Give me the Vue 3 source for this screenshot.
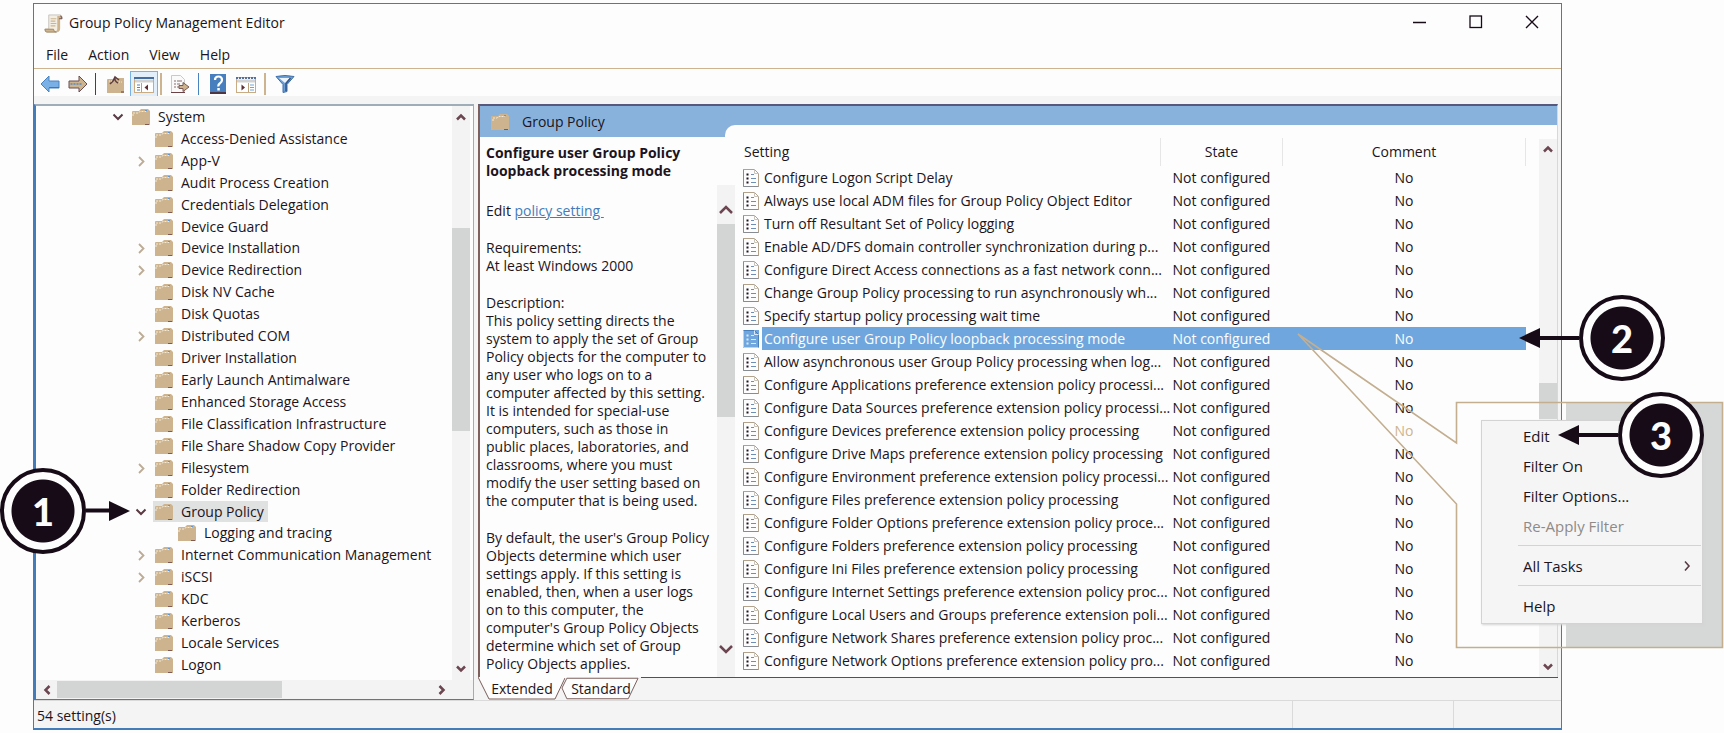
<script setup>
import { ref } from 'vue'

const menus = ['File', 'Action', 'View', 'Help']

const tree = [
  { name: 'System', level: 0, mark: 'open' },
  { name: 'Access-Denied Assistance', level: 1 },
  { name: 'App-V', level: 1, mark: 'closed' },
  { name: 'Audit Process Creation', level: 1 },
  { name: 'Credentials Delegation', level: 1 },
  { name: 'Device Guard', level: 1 },
  { name: 'Device Installation', level: 1, mark: 'closed' },
  { name: 'Device Redirection', level: 1, mark: 'closed' },
  { name: 'Disk NV Cache', level: 1 },
  { name: 'Disk Quotas', level: 1 },
  { name: 'Distributed COM', level: 1, mark: 'closed' },
  { name: 'Driver Installation', level: 1 },
  { name: 'Early Launch Antimalware', level: 1 },
  { name: 'Enhanced Storage Access', level: 1 },
  { name: 'File Classification Infrastructure', level: 1 },
  { name: 'File Share Shadow Copy Provider', level: 1 },
  { name: 'Filesystem', level: 1, mark: 'closed' },
  { name: 'Folder Redirection', level: 1 },
  { name: 'Group Policy', level: 1, mark: 'open', selected: true },
  { name: 'Logging and tracing', level: 2 },
  { name: 'Internet Communication Management', level: 1, mark: 'closed' },
  { name: 'iSCSI', level: 1, mark: 'closed' },
  { name: 'KDC', level: 1 },
  { name: 'Kerberos', level: 1 },
  { name: 'Locale Services', level: 1 },
  { name: 'Logon', level: 1 },
]

const settings = [
  'Configure Logon Script Delay',
  'Always use local ADM files for Group Policy Object Editor',
  'Turn off Resultant Set of Policy logging',
  'Enable AD/DFS domain controller synchronization during p...',
  'Configure Direct Access connections as a fast network conn...',
  'Change Group Policy processing to run asynchronously wh...',
  'Specify startup policy processing wait time',
  'Configure user Group Policy loopback processing mode',
  'Allow asynchronous user Group Policy processing when log...',
  'Configure Applications preference extension policy processi...',
  'Configure Data Sources preference extension policy processi...',
  'Configure Devices preference extension policy processing',
  'Configure Drive Maps preference extension policy processing',
  'Configure Environment preference extension policy processi...',
  'Configure Files preference extension policy processing',
  'Configure Folder Options preference extension policy proce...',
  'Configure Folders preference extension policy processing',
  'Configure Ini Files preference extension policy processing',
  'Configure Internet Settings preference extension policy proc...',
  'Configure Local Users and Groups preference extension poli...',
  'Configure Network Shares preference extension policy proc...',
  'Configure Network Options preference extension policy pro...',
]
const selected = ref(7)
const dimmed = 11

const description = [
  ['This policy setting directs the', 'system to apply the set of Group', 'Policy objects for the computer to',
    'any user who logs on to a', 'computer affected by this setting.', 'It is intended for special-use',
    'computers, such as those in', 'public places, laboratories, and', 'classrooms, where you must',
    'modify the user setting based on', 'the computer that is being used.'],
  ["By default, the user's Group Policy", 'Objects determine which user', 'settings apply. If this setting is',
    'enabled, then, when a user logs', 'on to this computer, the', "computer's Group Policy Objects",
    'determine which set of Group', 'Policy Objects applies.'],
]
</script>

<template>
  <div class="page">
    <main class="window">
      <header class="title-bar">
        <svg class="app-icon" viewBox="0 0 20 20" aria-hidden="true">
          <path d="M5 1h12q2 0 2 3h-3v12q0 3-3 3H3q-2 0-2-3h4z" fill="#f3eee4" stroke="#c6c3bd" />
          <path d="M14 2h3v13q0 4-4 4H3q-2 0-2-3h9q0 2 2 2 2 0 2-3z" fill="#cdb48e" />
          <path d="M10 16q0 3 3 3H3q-2 0-2-3z" fill="#cdb48e" stroke="#a58a63" />
          <path d="M7 5h6M7 7.500h5M7 10h6M7 12.500h5" stroke="#cdb48e" stroke-width="1.300" />
          <path d="M17 2q2 0 2 3h-3" fill="#c9a97d" stroke="#6a4a4c" />
        </svg>
        <h1>Group Policy Management Editor</h1>
        <div class="caption-buttons">
          <button aria-label="Minimize"><svg viewBox="0 0 14 14"><path d="M0 7.500h13" stroke="#160b16" stroke-width="1.500" /></svg></button>
          <button aria-label="Maximize"><svg viewBox="0 0 14 14"><rect x="1" y="1" width="11.500" height="11.500" fill="none" stroke="#160b16" stroke-width="1.300" /></svg></button>
          <button aria-label="Close"><svg viewBox="0 0 14 14"><path d="M1 1l12 12M13 1L1 13" stroke="#160b16" stroke-width="1.400" /></svg></button>
        </div>
      </header>

      <nav class="menu-bar">
        <button v-for="m in menus" :key="m">{{ m }}</button>
      </nav>

      <div class="toolbar">
        <button class="tool" aria-label="Back">
          <svg viewBox="0 0 20 18"><path d="M1 9L9 1v5h10v7H9v4z" fill="#79b0e6" stroke="#4a82bf" /><path d="M9 12.500h10" stroke="#3f76b5" /></svg>
        </button>
        <button class="tool forward" aria-label="Forward">
          <svg viewBox="0 0 20 18"><path d="M19 9l-8-8v5H1v7h10v4z" fill="#cdb48e" stroke="#6b4d50" /><path d="M2.500 9h12" stroke="#5a88bd" stroke-width="1.500" stroke-dasharray="2 1" /></svg>
        </button>
        <i class="sep dark"></i>
        <button class="tool" aria-label="Up one level">
          <svg viewBox="0 0 20 18"><path d="M1 5q0-1 1-1h5l2-1h9v15H1z" fill="#cdb48e" /><path d="M4 9l3-3 2-4 4 3M9 2q-1 4 3 6" fill="none" stroke="#5d3c42" stroke-width="1.500" /><path d="M3 6h3M13 7h3" stroke="#f3e9d8" stroke-dasharray="1 1" /><path d="M15 17h3" stroke="#6b3f44" /></svg>
        </button>
        <button class="tool pressed" aria-label="Show or hide console tree" aria-pressed="true">
          <svg viewBox="0 0 20 18"><rect x=".5" y="2.500" width="19" height="15" fill="#fff" stroke="#c9ab84" /><path d="M0 3h20" stroke="#456d9f" stroke-width="2" /><path d="M1 6h18" stroke="#d2d2d2" stroke-width="3" /><path d="M7.500 8v9" stroke="#bda17a" /><path d="M3 10h3M3 12.500h3M3 15h3" stroke="#4a82bf" /><path d="M14 9.500v6L10.500 12.500z" fill="#5d2e35" /></svg>
        </button>
        <i class="sep near"></i>
        <button class="tool" aria-label="Export list">
          <svg viewBox="0 0 20 18"><path d="M1.500.500h9l4 4v13h-13z" fill="#fafafa" stroke="#c9c9c9" /><path d="M4 6h2M7 6h5M4 9h2M7 9h3M4 12h2M7 12h5" stroke="#8a6c6a" /><path d="M9 10.500h4V7.500l6 4.500-6 4.500v-3H9z" fill="#cdb48e" stroke="#7b5a54" /><path d="M1 17.500h14" stroke="#6b4145" /></svg>
        </button>
        <i class="sep blue"></i>
        <button class="tool help" aria-label="Help">
          <svg viewBox="0 0 16 20"><rect width="16" height="20" fill="#477fbe" /><path d="M0 19h16" stroke="#4d3541" stroke-width="2" /><path d="M5 6q0-3.500 3.500-3.500T12 6q0 2-2 3.200T8.500 12.500" fill="none" stroke="#fff" stroke-width="2.200" /><rect x="7.300" y="14" width="2.500" height="2.500" fill="#fff" /></svg>
        </button>
        <button class="tool actions" aria-label="Show or hide action pane">
          <svg viewBox="0 0 20 18"><rect x=".5" y="2.500" width="19" height="15" fill="#fff" stroke="#c9ab84" /><path d="M0 3h20" stroke="#54709a" stroke-width="2" stroke-dasharray="2 1" /><path d="M1 6h18" stroke="#d2d2d2" stroke-width="3" /><path d="M12.500 8v9" stroke="#bda17a" /><path d="M14 10h4M14 12.500h4M14 15h4" stroke="#6ba4dd" /><path d="M5.500 9.500v6L9 12.500z" fill="#5d2e35" /></svg>
        </button>
        <i class="sep far"></i>
        <button class="tool" aria-label="Filter">
          <svg viewBox="0 0 20 18"><path d="M1 1.500q9-2 18 0L12 9.500v7l-4 1v-8z" fill="#6ba0d6" stroke="#3f6fa8" /><path d="M4 3h11L10 8z" fill="#eef4fb" /><path d="M15.500 3L11 8.500V16" fill="none" stroke="#31568a" stroke-width="1.500" /></svg>
        </button>
      </div>

      <div class="panes">
        <section class="tree-pane">
          <div class="tree-main">
            <ul class="tree">
              <li v-for="n in tree" :key="n.name" :class="['level-' + n.level, { selected: n.selected }]">
                <span class="expander">
                  <svg v-if="n.mark === 'open'" viewBox="0 0 12 12"><path d="M1.500 3.500L6 8l4.500-4.500" fill="none" stroke="#5a3a43" stroke-width="2" /></svg>
                  <svg v-else-if="n.mark === 'closed'" viewBox="0 0 12 12"><path d="M4 2l4.500 4.500L4 11" fill="none" stroke="#bcab96" stroke-width="1.800" /></svg>
                </span>
                <span class="node">
                  <svg class="folder" viewBox="0 0 18 16"><path d="M0 3q0-1 1-1h6l2-2h7l2 2v14H0z" fill="#cdb48e" /><path d="M1 7V4h5l2-1.500h6" fill="none" stroke="#f3e9d8" stroke-dasharray="2 1" /><path d="M13 1.500h2" stroke="#5d98d8" /><path d="M13 15.500h4" stroke="#805a52" /></svg>
                  {{ n.name }}
                </span>
              </li>
            </ul>
            <div class="vbar">
              <button aria-label="Scroll tree up"><svg viewBox="0 0 12 12"><path d="M2 8.500l4-4 4 4" /></svg></button>
              <div class="track"><div class="thumb tree-thumb"></div></div>
              <button aria-label="Scroll tree down"><svg viewBox="0 0 12 12"><path d="M2 3.500l4 4 4-4" /></svg></button>
            </div>
          </div>
          <div class="hbar">
            <button aria-label="Scroll tree left"><svg viewBox="0 0 12 12"><path d="M8.500 2l-4 4 4 4" /></svg></button>
            <div class="track"><div class="thumb wide-thumb"></div></div>
            <button aria-label="Scroll tree right"><svg viewBox="0 0 12 12"><path d="M3.500 2l4 4-4 4" /></svg></button>
          </div>
        </section>

        <section class="detail-pane">
          <div class="detail">
            <div class="detail-head">
              <h2>
                <svg class="folder" viewBox="0 0 18 16"><path d="M0 3q0-1 1-1h6l2-2h7l2 2v14H0z" fill="#cdb48e" /><path d="M2 7V4h4l2-1.500h6" fill="none" stroke="#f3e9d8" stroke-dasharray="2 1" /><path d="M13 1.500h2" stroke="#5d98d8" /><path d="M13 15.500h4" stroke="#805a52" /></svg>
                Group Policy
              </h2>
              <div class="curve"></div>
            </div>
            <div class="detail-body">
              <article class="description">
                <h3>Configure user Group Policy<br>loopback processing mode</h3>
                <p class="edit">Edit <a href="#">policy setting&nbsp;</a></p>
                <p>Requirements:<br>At least Windows 2000</p>
                <div>
                  Description:
                  <div v-for="line in description[0]" :key="line">{{ line }}</div>
                </div>
                <div>
                  <div v-for="line in description[1]" :key="line">{{ line }}</div>
                </div>
              </article>
              <div class="vbar desc-bar">
                <button aria-label="Scroll description up"><svg viewBox="0 0 16 12"><path d="M2 10l6-6 6 6" /></svg></button>
                <div class="track"><div class="thumb desc-thumb"></div></div>
                <button aria-label="Scroll description down"><svg viewBox="0 0 16 12"><path d="M2 2l6 6 6-6" /></svg></button>
              </div>
              <div class="list">
                <table>
                  <colgroup><col class="c-icon"><col><col class="c-state"><col class="c-comment"></colgroup>
                  <thead>
                    <tr><th colspan="2">Setting</th><th>State</th><th>Comment</th></tr>
                  </thead>
                  <tbody>
                    <tr v-for="(s, i) in settings" :key="s" :class="{ selected: i === selected, dimmed: i === dimmed }" @click="selected = i">
                      <td>
                        <svg class="doc" viewBox="0 0 16 18"><path d="M.5.500h11l4 4v13H.5z" fill="#fdfdfd" stroke="#a9977f" stroke-width=".9" /><path d="M11.500.500v4h4" fill="none" stroke="#c9c4bb" /><path d="M.5.500v17h15" fill="none" stroke="#7c8795" stroke-width=".8" /><path d="M3.500 5.500h2M3.500 9.500h2M3.500 13.500h2" stroke="#1c1420" stroke-width="2" /><path d="M8 5.500h3M8 9.500h5M8 13.500h5" stroke="#6d8fb5" stroke-width="1.200" /></svg>
                      </td>
                      <td>{{ s }}</td>
                      <td>Not configured</td>
                      <td>No</td>
                    </tr>
                  </tbody>
                </table>
              </div>
              <div class="vbar list-bar">
                <button aria-label="Scroll list up"><svg viewBox="0 0 12 12"><path d="M2 8.500l4-4 4 4" /></svg></button>
                <div class="track"><div class="thumb list-thumb"></div></div>
                <button aria-label="Scroll list down"><svg viewBox="0 0 12 12"><path d="M2 3.500l4 4 4-4" /></svg></button>
              </div>
            </div>
          </div>
          <div class="tabs">
            <button class="tab">
              <svg viewBox="0 0 88 23"><path d="M0 0h88L77 22H11z" fill="#fdfdfd" /><path d="M0 0l11 22h66L87 1" fill="none" stroke="#7a5c58" /></svg>
              <span>Extended</span>
            </button>
            <button class="tab second">
              <svg viewBox="0 0 80 23"><path d="M5 0h74L69 22H6L1 12z" fill="#fdfdfd" /><path d="M79 1H6L1 11l5 11h63z" fill="none" stroke="#7a5c58" /></svg>
              <span>Standard</span>
            </button>
            <div class="tab-rest"></div>
          </div>
        </section>
      </div>

      <footer class="status">
        <span class="count">54 setting(s)</span>
        <span class="cell"></span>
        <span class="cell last"></span>
      </footer>
    </main>

    <div class="callout">
      <svg class="callout-shape" viewBox="0 0 428 320">
        <rect x="270" y="72" width="156" height="244" fill="#d6d8d7" />
        <path d="M160.500 71.500H426.500V316.500H160.500V173L2 3l158.500 109z" fill="none" stroke="#c3ae8f" stroke-width="1.600" />
      </svg>
      <div class="context-menu">
        <button>Edit</button>
        <button>Filter On</button>
        <button>Filter Options...</button>
        <button disabled>Re-Apply Filter</button>
        <hr>
        <button>All Tasks
          <svg viewBox="0 0 12 12"><path d="M4 1.500L8 6l-4 4.500" fill="none" stroke="#5a3a43" stroke-width="1.600" /></svg>
        </button>
        <hr>
        <button>Help</button>
      </div>
    </div>

    <div class="step one">
      <b>1</b>
      <svg viewBox="0 0 44 22"><path d="M0 10.500h25" stroke="#160b16" stroke-width="4" /><path d="M23 1v20l21-10z" fill="#160b16" /></svg>
    </div>
    <div class="step two">
      <svg class="long" viewBox="0 0 60 22"><path d="M19 11h41" stroke="#160b16" stroke-width="4" /><path d="M21 1v20L0 11z" fill="#160b16" /></svg>
      <b>2</b>
    </div>
    <div class="step three">
      <svg class="long" viewBox="0 0 60 22"><path d="M19 11h41" stroke="#160b16" stroke-width="4" /><path d="M21 1v20L0 11z" fill="#160b16" /></svg>
      <b>3</b>
    </div>
  </div>
</template>

<style>
body { background: #fdfdfd; }
</style>

<style scoped>
.page {
  position: relative;
  box-sizing: border-box;
  display: flex;
  height: 100vh;
  min-height: 733px;
  padding: 3px 162px 3px 33px;
  overflow: hidden;
  background: #fdfdfd;
  color: #1c1420;
  font: 14px/18px "Open Sans", "Noto Sans", sans-serif;
}
.page * { box-sizing: border-box; }
svg { display: block; flex: none; }
button { margin: 0; padding: 0; border: 0; background: none; color: inherit; font: inherit; }
h1, h2, h3, p, ul { margin: 0; padding: 0; font: inherit; list-style: none; }

.window {
  flex: 1;
  min-width: 0;
  display: flex;
  flex-direction: column;
  border: 1px solid #447cba;
  border-bottom-width: 2px;
}
.title-bar { display: flex; align-items: center; height: 38px; padding: 0 22px 0 10px; }
.app-icon { width: 19px; height: 19px; margin-right: 6px; }
.caption-buttons { display: flex; gap: 42px; margin-left: auto; margin-bottom: 2px; }
.caption-buttons svg { width: 14px; height: 14px; }
.menu-bar { display: flex; gap: 20px; height: 27px; padding: 0 12px; border-bottom: 1px solid #cdb48e; }

.toolbar { display: flex; align-items: center; gap: 4px; height: 27px; padding: 2px 6px 0; }
.tool svg { width: 20px; height: 18px; }
.tool.forward { margin-left: 4px; }
.tool.help svg { width: 16px; height: 20px; }
.tool.actions { margin-left: 6px; }
.tool.pressed { padding: 3px; border: 1px solid #79b0e6; background: #e2effb; }
.sep { width: 2px; height: 22px; background: #cdb48e; }
.sep.dark { width: 1px; margin: 0 6px 0 3px; background: #4b3d4b; }
.sep.near { margin: 0 4px 0 -2px; }
.sep.blue { width: 1px; margin: 0 7px 0 4px; background: #4a82bf; }
.sep.far { margin: 0 5px 0 4px; }

.panes { flex: 1; min-height: 0; display: flex; gap: 4px; padding: 8px 3px 0 0; background: #f4f4f4; }
.tree-pane {
  display: flex;
  flex-direction: column;
  width: 440px;
  border: 1px solid #9fadb9;
  border-top-width: 2px;
  border-left: 2px solid #447cba;
  border-bottom-color: #447cba;
  background: #fdfdfd;
}
.tree-main { flex: 1; min-height: 0; display: flex; }
.tree { flex: 1; min-width: 0; display: flex; flex-direction: column; padding: 0 0 4px 76px; }
.tree li { flex: 1; min-height: 0; display: flex; align-items: center; white-space: nowrap; }
.level-1 { padding-left: 23px; }
.level-2 { padding-left: 46px; }
.expander { width: 18px; }
.expander svg { width: 12px; height: 12px; }
.node { display: flex; align-items: center; gap: 8px; height: 21px; padding: 0 4px 0 2px; }
.selected .node { background: #e0e1e1; }
.folder { width: 18px; height: 16px; }

.vbar { display: flex; flex-direction: column; width: 18px; background: #f3f3f3; }
.vbar button, .hbar button { display: flex; align-items: center; justify-content: center; width: 18px; height: 22px; }
.vbar svg, .hbar svg { width: 12px; height: 12px; fill: none; stroke: #6b4550; stroke-width: 2.500; }
.track { flex: 1; display: flex; }
.thumb { background: #d3d5d4; }
.vbar .thumb { width: 100%; }
.tree-main .vbar { margin-right: 3px; }
.tree-thumb { height: 203px; margin-top: 100px; }
.hbar { display: flex; align-items: center; height: 19px; padding-right: 21px; background: #f3f3f3; }
.hbar .track { height: 17px; }
.hbar button { width: 21px; }
.wide-thumb { width: 225px; }

.detail-pane { flex: 1; min-width: 0; display: flex; flex-direction: column; }
.detail {
  flex: 1;
  min-height: 0;
  display: flex;
  flex-direction: column;
  border-top: 2px solid #56587c;
  border-left: 2px solid #80605c;
  border-right: 1px solid #d8d8d8;
  background: #fdfdfd;
}
.detail-head { display: flex; height: 31px; background: #88b2dc; }
.detail-head h2 { display: flex; align-items: center; gap: 13px; width: 245px; padding-left: 11px; }
.curve { flex: 1; align-self: flex-end; height: 12px; border-top-left-radius: 10px; background: #fdfdfd; }
.detail-body { flex: 1; min-height: 0; display: flex; }
.description { display: flex; flex-direction: column; gap: 19px; width: 237px; padding: 7px 0 0 6px; white-space: nowrap; overflow: hidden; }
.description h3 { font-weight: 700; }
.edit { margin-top: 3px; }
.description a { color: #447cba; text-decoration: underline; }
.desc-bar { margin-top: 48px; }
.desc-bar button { height: 39px; padding-top: 9px; }
.desc-bar button:last-child { padding: 0 0 14px; height: 40px; }
.desc-bar svg { width: 16px; height: 12px; }
.desc-thumb { height: 193px; }

.list { flex: 1; min-width: 0; padding: 1px 13px 0 7px; overflow: hidden; }
table { width: 100%; table-layout: fixed; border-collapse: collapse; }
.c-icon { width: 20px; }
.c-state { width: 122px; }
.c-comment { width: 243px; }
th { height: 28px; padding: 0; font-weight: 400; border-right: 1px solid #e6e6e6; }
th:first-child { padding-left: 2px; text-align: left; }
td { height: 23px; padding: 0; line-height: 18px; text-align: center; white-space: nowrap; }
td:first-child { padding-left: 1px; }
td:nth-child(2) { padding-left: 2px; text-align: left; }
.doc { width: 16px; height: 18px; }
tr.selected td { background: #6fa6dd; color: #fdfdfd; }
tr.selected td:first-child { background: none; }
tr.selected .doc { background: #6fa6dd; }
tr.selected .doc path { fill: none; stroke: #dceafa; }
tr.selected .doc path:first-child { stroke: #447cba; }
tr.dimmed td:last-child { color: #cdb48e; }
.list-bar { margin-top: 2px; }
.list-bar button { height: 20px; }
.list-thumb { height: 36px; margin-top: 224px; }

.tabs { display: flex; height: 23px; }
.tab { position: relative; width: 88px; height: 23px; }
.tab svg { width: 100%; height: 23px; }
.tab span { position: absolute; inset: 3px 0 0 0; text-align: center; }
.tab.second { width: 80px; margin-left: -5px; padding-right: 2px; }
.tab-rest { flex: 1; border-top: 1px solid #6b4550; }

.status { display: flex; align-items: center; height: 28px; padding-left: 3px; border-top: 1px solid #dadada; background: #f4f4f4; }
.count { flex: 1; padding-top: 2px; }
.cell { width: 161px; height: 100%; border-left: 1px solid #dadada; }
.cell.last { width: 108px; }

.callout { position: absolute; top: 331px; right: 0; width: 428px; height: 320px; pointer-events: none; }
.callout-shape { width: 428px; height: 320px; }
.context-menu {
  position: absolute;
  top: 89px;
  right: 21px;
  width: 222px;
  padding: 0 1px 2px 0;
  border: 1px solid #d3d3d3;
  background: #f5f5f5;
  font-size: 15px;
  box-shadow: 1px 1px 2px #d3d3d3;
}
.context-menu button { display: flex; align-items: center; justify-content: space-between; width: 100%; height: 30px; padding: 0 8px 0 41px; }
.context-menu button:disabled { color: #8f8a88; }
.context-menu svg { width: 12px; height: 12px; }
.context-menu hr { height: 1px; margin: 4px 0 5px 36px; border: 0; background: #d3d3d3; }

.step { position: absolute; display: flex; align-items: center; }
.step b {
  display: flex;
  align-items: center;
  justify-content: center;
  width: 86px;
  height: 86px;
  border: 4px solid #160b16;
  border-radius: 50%;
  background: radial-gradient(circle, #160b16 31px, #fdfdfd 32px);
  color: #fdfdfd;
  font: 900 38px/38px Lato, "Open Sans", sans-serif;
}
.step svg { width: 44px; height: 22px; }
.step .long { width: 60px; height: 22px; }
.one { left: 0; top: 468px; }
.two { right: 59px; top: 295px; }
.three { right: 20px; top: 392px; }
</style>
